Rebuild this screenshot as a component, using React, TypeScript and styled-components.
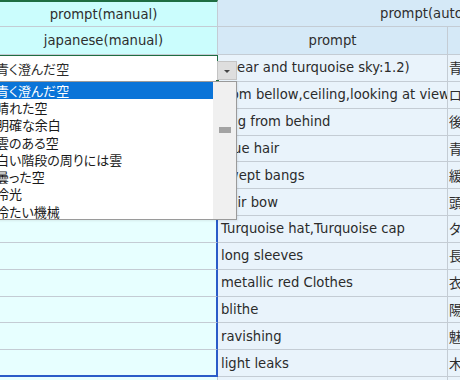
import React from 'react'
import styled, { createGlobalStyle, css } from 'styled-components'

const GlobalStyle = createGlobalStyle`
	html, body {
		margin: 0;
		padding: 0;
		background: #ffffff;
	}
	body {
		width: 460px;
		height: 380px;
		overflow: hidden;
		font-family: 'DejaVu Sans', 'Noto Sans CJK JP', sans-serif;
		color: #2b2b2b;
	}
`

const GRID = '#c4ccd4'
const EXCEL_GREEN = '#1e6e42'
const RANGE_BLUE = '#2a5cc8'

const Sheet = styled.div`
	display: grid;
	grid-template-columns: 228px 230px 220px;
	grid-auto-rows: 26.85px;
	grid-template-rows: 27px 28px;
	margin-left: -10px;
	font-size: 13.2px;
`

const HeadCell = styled.div<{ $tone: 'cyan' | 'blue'; $span?: number; $active?: boolean }>`
	box-sizing: border-box;
	display: flex;
	align-items: center;
	justify-content: center;
	white-space: nowrap;
	overflow: hidden;
	color: #2e2e2e;
	border-right: 1px solid ${GRID};
	border-bottom: 1px solid ${GRID};
	background: ${(p) => (p.$tone === 'cyan' ? '#cbfdfd' : '#d5e9f7')};
	grid-column: span ${(p) => p.$span ?? 1};
	${(p) =>
		p.$active &&
		css`
			border-top: 2px solid ${EXCEL_GREEN};
		`}
`

const ManualCell = styled.div<{ $selected?: boolean; $range?: boolean; $last?: boolean }>`
	box-sizing: border-box;
	position: relative;
	display: flex;
	align-items: center;
	padding-left: 6px;
	white-space: nowrap;
	font-size: 13px;
	background: #e7ffff;
	border-right: 1px solid ${GRID};
	border-bottom: 1px solid ${GRID};
	${(p) =>
		p.$range &&
		css`
			border-right: 2px solid ${RANGE_BLUE};
		`}
	${(p) =>
		p.$last &&
		css`
			border-bottom: 2px solid ${RANGE_BLUE};
		`}
	${(p) =>
		p.$selected &&
		css`
			background: #ffffff;
			border-top: 1px solid ${EXCEL_GREEN};
			border-right: 1px solid ${EXCEL_GREEN};
			border-bottom: 1px solid ${EXCEL_GREEN};
		`}
`

const TextCell = styled.div<{ $pad?: number }>`
	box-sizing: border-box;
	display: flex;
	align-items: center;
	padding-left: ${(p) => p.$pad ?? 3}px;
	white-space: nowrap;
	overflow: hidden;
	background: #e9f3fb;
	border-right: 1px solid ${GRID};
	border-bottom: 1px solid ${GRID};
`

const ArrowButton = styled.div`
	position: absolute;
	left: 227px;
	top: 5px;
	width: 20px;
	height: 19px;
	box-sizing: border-box;
	background: #dedede;
	border: 1px solid #c4c4c4;
	display: flex;
	align-items: center;
	justify-content: center;
	z-index: 3;

	&::after {
		content: '';
		border-left: 3px solid transparent;
		border-right: 3px solid transparent;
		border-top: 3px solid #444;
		margin-top: 1px;
	}
`

const FillHandle = styled.div`
	position: absolute;
	right: -3px;
	bottom: -3px;
	width: 5px;
	height: 5px;
	background: ${EXCEL_GREEN};
	border: 1px solid #ffffff;
	box-sizing: border-box;
	z-index: 2;
`

const DropList = styled.div`
	position: absolute;
	left: 0;
	top: 100%;
	width: 247px;
	height: 139px;
	box-sizing: border-box;
	background: #ffffff;
	border: 1px solid #9a9a9a;
	display: flex;
	z-index: 4;
	box-shadow: 1px 1px 2px rgba(0, 0, 0, 0.08);
`

const Options = styled.ul`
	list-style: none;
	margin: 0;
	padding: 0;
	flex: 1;
	font-family: 'Noto Sans CJK JP', sans-serif;
	font-size: 13px;
	font-feature-settings: 'palt';
`

const Option = styled.li<{ $active?: boolean }>`
	height: 17.25px;
	line-height: 17.25px;
	padding-left: 5px;
	white-space: nowrap;
	color: ${(p) => (p.$active ? '#ffffff' : '#1a1a1a')};
	background: ${(p) => (p.$active ? '#0a74d8' : 'transparent')};
`

const ScrollTrack = styled.div`
	width: 23px;
	background: #f0f0f0;
	display: flex;
	justify-content: center;
`

const ScrollThumb = styled.div`
	margin-top: 45px;
	width: 12px;
	height: 6px;
	background: #a3a3a3;
`

const CjkText = styled.span`
	font-family: 'Noto Sans CJK JP', sans-serif;
	font-feature-settings: 'palt';
`

const choices = [
	'青く澄んだ空',
	'晴れた空',
	'明確な余白',
	'雲のある空',
	'白い階段の周りには雲',
	'曇った空',
	'冷光',
	'冷たい機械',
]

const rows = [
	{ prompt: '(clear and turquoise sky:1.2)', ja: '青く澄んだ空' },
	{ prompt: 'from bellow,ceiling,looking at viewer', ja: 'ローアングル,天井' },
	{ prompt: 'hug from behind', ja: '後ろから抱きしめる' },
	{ prompt: 'blue hair', ja: '青い髪' },
	{ prompt: 'swept bangs', ja: '緩い前髪' },
	{ prompt: 'hair bow', ja: '頭のリボン' },
	{ prompt: 'Turquoise hat,Turquoise cap', ja: 'ターコイズの帽子' },
	{ prompt: 'long sleeves', ja: '長袖' },
	{ prompt: 'metallic red Clothes', ja: '衣装' },
	{ prompt: 'blithe', ja: '陽気' },
	{ prompt: 'ravishing', ja: '魅惑的' },
	{ prompt: 'light leaks', ja: '木漏れ日' },
	{ prompt: '', ja: '' },
]

export default function App() {
	return (
		<>
			<GlobalStyle />
			<Sheet>
				<HeadCell $tone="cyan" $active>
					prompt(manual)
				</HeadCell>
				<HeadCell $tone="blue" $span={2}>
					prompt(automatic)
				</HeadCell>

				<HeadCell $tone="cyan">japanese(manual)</HeadCell>
				<HeadCell $tone="blue">prompt</HeadCell>
				<HeadCell $tone="blue" />

				{rows.map((row, i) => (
					<React.Fragment key={i}>
						{i === 0 ? (
							<ManualCell $selected>
								<CjkText>青く澄んだ空</CjkText>
								<FillHandle />
								<ArrowButton />
								<DropList>
									<Options>
										{choices.map((c, j) => (
											<Option key={c} $active={j === 0}>
												{c}
											</Option>
										))}
									</Options>
									<ScrollTrack>
										<ScrollThumb />
									</ScrollTrack>
								</DropList>
							</ManualCell>
						) : (
							<ManualCell $range={i < 12} $last={i === 11} />
						)}
						<TextCell>{row.prompt}</TextCell>
						<TextCell $pad={1}>
							<CjkText>{row.ja}</CjkText>
						</TextCell>
					</React.Fragment>
				))}
			</Sheet>
		</>
	)
}
